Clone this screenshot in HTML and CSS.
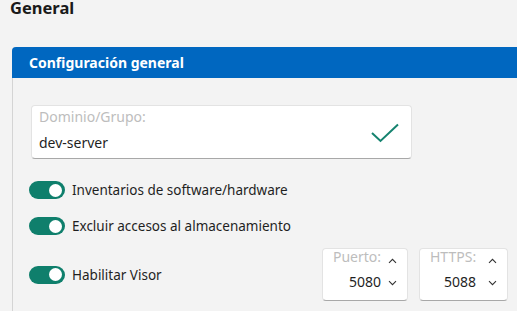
FILE: index.html
```html
<!DOCTYPE html>
<html lang="es">
<head>
  <meta charset="UTF-8">
  <title>General</title>
  <link rel="stylesheet" href="styles.css">
</head>
<body>

<h1 class="page-title">General</h1>

<div class="panel">
  <div class="panel-header">Configuración general</div>

  <div class="panel-body">
    <!-- Domain field -->
    <div class="field">
      <div class="field-text">
        <span class="field-label">Dominio/Grupo:</span>
        <span class="field-value">dev-server</span>
      </div>
      <svg class="check" width="28" height="20" viewBox="0 0 28 20">
        <path d="M1 10 L9.5 18 L27 1.5" fill="none" stroke="#15836f" stroke-width="2"/>
      </svg>
    </div>

    <div class="switch-row">
      <span class="switch"><span class="knob"></span></span>
      <span class="switch-label">Inventarios de software/hardware</span>
    </div>

    <div class="switch-row">
      <span class="switch"><span class="knob"></span></span>
      <span class="switch-label">Excluir accesos al almacenamiento</span>
    </div>

    <div class="switch-row with-ports">
      <div class="switch-main">
        <span class="switch"><span class="knob"></span></span>
        <span class="switch-label">Habilitar Visor</span>
      </div>

      <div class="spin">
        <div class="spin-text">
          <span class="spin-label">Puerto:</span>
          <span class="spin-value">5080</span>
        </div>
        <div class="spin-arrows">
          <svg width="9" height="6" viewBox="0 0 9 6"><path d="M1 4.8 L4.5 1.3 L8 4.8" fill="none" stroke="#333" stroke-width="1.1"/></svg>
          <svg width="9" height="6" viewBox="0 0 9 6"><path d="M1 1.2 L4.5 4.7 L8 1.2" fill="none" stroke="#333" stroke-width="1.1"/></svg>
        </div>
      </div>

      <div class="spin">
        <div class="spin-text">
          <span class="spin-label">HTTPS:</span>
          <span class="spin-value">5088</span>
        </div>
        <div class="spin-arrows">
          <svg width="9" height="6" viewBox="0 0 9 6"><path d="M1 4.8 L4.5 1.3 L8 4.8" fill="none" stroke="#333" stroke-width="1.1"/></svg>
          <svg width="9" height="6" viewBox="0 0 9 6"><path d="M1 1.2 L4.5 4.7 L8 1.2" fill="none" stroke="#333" stroke-width="1.1"/></svg>
        </div>
      </div>
    </div>
  </div>
</div>

</body>
</html>
```

FILE: styles.css
```css
:root {
  --bg: #f3f3f3;
  --surface: #ffffff;
  --text: #1f1f1f;
  --muted: #bdbdbd;
  --border: #e3e3e3;
  --border-dark: #a8a8a8;
  --blue: #0067c0;
  --teal: #0f7f6c;
  --font: 'Noto Sans', 'Open Sans', Arial, sans-serif;
}

html, body {
  margin: 0;
  padding: 0;
  overflow: hidden;
}

body {
  background: var(--bg);
  color: var(--text);
  font-family: var(--font);
  font-size: 13.5px;
}

.page-title {
  margin: 0 0 31px 10px;
  font-size: 16.5px;
  line-height: 16px;
  font-weight: 700;
  color: #1a1a1a;
}

.panel {
  margin-left: 12px;
  margin-right: -20px;
  border-left: 1px solid #d4d4d4;
  border-radius: 4px 0 0 0;
  min-height: 264px;
}

.panel-header {
  background: var(--blue);
  color: #fff;
  font-weight: 700;
  font-size: 14px;
  height: 31px;
  line-height: 31px;
  padding-left: 17px;
  margin-left: -1px;
  border-radius: 4px 0 0 0;
}

.panel-body {
  padding: 27px 0 0 16px;
}

.field {
  display: flex;
  align-items: center;
  justify-content: space-between;
  width: 381px;
  height: 54px;
  box-sizing: border-box;
  margin-left: 2px;
  padding: 0 12px 0 7px;
  background: var(--surface);
  border: 1px solid var(--border);
  border-bottom-color: var(--border-dark);
  border-radius: 4px;
}

.field-text {
  align-self: flex-start;
  display: flex;
  flex-direction: column;
  gap: 9px;
  padding-top: 3px;
}

.field-label {
  color: var(--muted);
  font-size: 14px;
  line-height: 16px;
}

.field-value {
  font-size: 14px;
  line-height: 18px;
}

.check {
  margin-top: 1px;
}

.switch-row {
  display: flex;
  align-items: center;
  gap: 7px;
  height: 36px;
}
.field + .switch-row {
  margin-top: 13px;
}

.switch {
  position: relative;
  flex: none;
  width: 36px;
  height: 18px;
  border-radius: 9px;
  background: var(--teal);
}
.knob {
  position: absolute;
  top: 2.5px;
  right: 3.5px;
  width: 13px;
  height: 13px;
  border-radius: 50%;
  background: #fff;
}

.switch-row.with-ports {
  height: 53px;
  margin-top: 4px;
  gap: 11px;
}

.switch-main {
  display: flex;
  align-items: center;
  gap: 7px;
  width: 282px;
}

.spin {
  display: flex;
  justify-content: space-between;
  box-sizing: border-box;
  width: 86px;
  height: 53px;
  padding: 0 10px 0 10px;
  background: var(--surface);
  border: 1px solid var(--border);
  border-bottom-color: var(--border-dark);
  border-radius: 4px;
}
.spin + .spin {
  width: 89px;
}

.spin-text {
  display: flex;
  flex-direction: column;
  gap: 8px;
  padding-top: 0;
}

.spin-label {
  color: var(--muted);
  font-size: 14px;
  line-height: 16px;
}

.spin-value {
  text-align: right;
  font-size: 14px;
  line-height: 18px;
}

.spin-arrows {
  display: flex;
  flex-direction: column;
  gap: 16px;
  padding-top: 9px;
}
.spin-arrows svg {
  display: block;
}
```
